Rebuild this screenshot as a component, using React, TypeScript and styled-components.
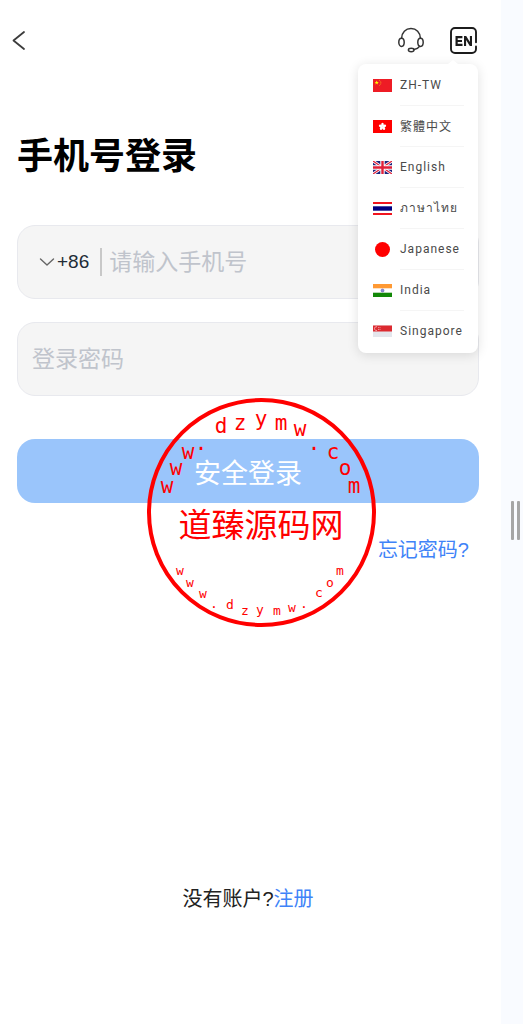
import React from 'react';
import styled, { createGlobalStyle } from 'styled-components';

const GlobalStyle = createGlobalStyle`
  *, *::before, *::after { box-sizing: border-box; }
  body {
    margin: 0;
    background: #fff;
    color: #000;
    font-family: "Liberation Sans", "Noto Sans CJK SC", sans-serif;
  }
  button, input { font: inherit; color: inherit; }
  button { padding: 0; border: 0; background: none; cursor: pointer; }
  svg { display: block; }
`;

const Page = styled.div`
  position: relative;
  display: flex;
  min-height: 100vh;
`;

const Screen = styled.main`
  flex: 1;
  min-width: 0;
  display: flex;
  flex-direction: column;
  padding: 0 22px 110px 17px;
`;

const Rail = styled.aside`
  flex: none;
  width: 22px;
  display: flex;
  align-items: center;
  gap: 3px;
  padding: 17px 0 0 10px;
  background: #f9fbff;
`;

const Grip = styled.span`
  width: 3px;
  height: 39px;
  border-radius: 1px;
  background: #a6a6a6;
`;

const Header = styled.header`
  display: flex;
  align-items: center;
  height: 80px;
`;

const IconButton = styled.button`
  display: flex;
`;

const BackButton = styled(IconButton)`
  margin: 0 auto 0 -8px;
`;

const Language = styled.div`
  position: relative;
  margin: 0 2px 0 25px;
`;

const Menu = styled.ul`
  position: absolute;
  z-index: 2;
  top: 37px;
  right: -1px;
  width: 120px;
  margin: 0;
  padding: 1px 14px 1px 15px;
  list-style: none;
  border-radius: 8px;
  background: #fff;
  box-shadow: 0 2px 12px rgba(0, 0, 0, 0.12);

  &::before {
    content: "";
    position: absolute;
    top: -4px;
    right: 20px;
    border: solid transparent;
    border-width: 0 5px 4px;
    border-bottom-color: #fff;
  }
`;

const MenuItem = styled.button`
  display: flex;
  align-items: center;
  gap: 8px;
  width: 100%;
  height: 41px;
  color: #4a4a4a;
  font-family: Roboto, "Noto Sans CJK TC", sans-serif;
  font-size: 12px;
  letter-spacing: 1px;
  text-align: left;
  white-space: nowrap;
`;

const MenuLabel = styled.span`
  flex: 1;
  display: flex;
  align-items: center;
  height: 100%;
  border-bottom: 1px solid #f5f5f5;

  li:last-child & { border-bottom-color: transparent; }
`;

const Title = styled.h1`
  margin: 50px 0 41px;
  font-size: 36px;
  line-height: 54px;
  font-weight: 700;
`;

const Form = styled.form`
  display: flex;
  flex-direction: column;
`;

const Field = styled.div`
  display: flex;
  align-items: center;
  height: 74px;
  margin-bottom: 23px;
  padding: 0 14px;
  border: 1px solid #e8e9ee;
  border-radius: 18px;
  background: #f5f5f5;
`;

const DialCode = styled.button`
  display: flex;
  align-items: center;
  gap: 2px;
  margin-left: 7px;
  padding-right: 11px;
  color: #222b36;
  font-size: 19px;
  line-height: 28px;
`;

const Divider = styled.span`
  width: 2px;
  height: 28px;
  margin-right: 7px;
  background: #c8c8c8;
`;

const TextInput = styled.input`
  flex: 1;
  min-width: 0;
  height: 40px;
  padding: 0;
  border: 0;
  outline: 0;
  background: none;
  font-size: 23px;

  &::placeholder { color: #c0c4cc; opacity: 1; }
`;

const Submit = styled.button`
  height: 64px;
  margin-top: 20px;
  border-radius: 18px;
  background: #9ac5fb;
  color: #fff;
  font-size: 27px;
`;

const TextLink = styled.a`
  color: #3f83f8;
  font-size: 20px;
  line-height: 30px;
  text-decoration: none;
`;

const ForgotLink = styled(TextLink)`
  align-self: flex-end;
  margin: 32px 10px 0 0;
`;

const Footer = styled.p`
  margin: auto 0 0;
  padding-top: 40px;
  color: #222;
  font-size: 20px;
  line-height: 30px;
  text-align: center;
`;

const Stamp = styled.svg`
  position: absolute;
  inset: 0;
  margin: auto;
  pointer-events: none;
  fill: #f00;
  text-anchor: middle;
  font-family: "DejaVu Sans Mono", monospace;
`;

const StampName = styled.text`
  font-family: "Noto Sans CJK SC", sans-serif;
  font-size: 33px;
`;

type Glyph = [string, number, number];

const outerRing: Glyph[] = [
  ['w', 20, 95], ['w', 29, 77], ['w', 41, 61], ['.', 54, 52],
  ['d', 74, 35], ['z', 93, 32], ['y', 114, 28], ['m', 134, 32], ['w', 153, 38],
  ['.', 167, 52], ['c', 186, 61], ['o', 198, 77], ['m', 207, 95],
];

const innerRing: Glyph[] = [
  ['w', 33, 177], ['w', 43, 189], ['w', 56, 200], ['.', 67, 210],
  ['d', 83, 211], ['z', 98, 217], ['y', 113, 216], ['m', 130, 217], ['w', 145, 214],
  ['.', 157, 210], ['c', 172, 199], ['o', 183, 189], ['m', 193, 177],
];

function Ring({ glyphs, size }: { glyphs: Glyph[]; size: number }) {
  return (
    <g fontSize={size}>
      {glyphs.map(([char, x, y], i) => (
        <text key={i} x={x} y={y}>{char}</text>
      ))}
    </g>
  );
}

const star = 'M0-2.2L.6-.7 2.1-.7.9.3 1.3 1.8 0 .9-1.3 1.8-.9.3-2.1-.7-.6-.7z';

const flags: Record<string, React.ReactNode> = {
  china: (
    <>
      <path fill="#ee1c25" d="M0 0h19v13H0z" />
      <path fill="#ff0" transform="translate(3.7 3.7)" d={star} />
      <path fill="none" stroke="#f5a81c" strokeWidth=".9" strokeDasharray="1 .9" d="M6.3 1.2c2 1 2.2 4 0 5.4" />
    </>
  ),
  hongkong: (
    <>
      <path fill="#f00" d="M0 0h19v13H0z" />
      <g fill="#fff">
        {[0, 72, 144, 216, 288].map((a) => (
          <ellipse key={a} cx="9.5" cy="4.7" rx="1.3" ry="1.9" transform={`rotate(${a} 9.5 6.6)`} />
        ))}
      </g>
    </>
  ),
  uk: (
    <>
      <path fill="#1a237e" d="M0 0h19v13H0z" />
      <path stroke="#fff" strokeWidth="2.8" d="M0 0l19 13M19 0L0 13" />
      <path stroke="#e0203a" strokeWidth="1.2" d="M0 0l19 13M19 0L0 13" />
      <path stroke="#fff" strokeWidth="4.4" d="M9.5 0v13M0 6.5h19" />
      <path stroke="#e0203a" strokeWidth="2.4" d="M9.5 0v13M0 6.5h19" />
    </>
  ),
  thailand: (
    <>
      <path fill="#fff" d="M0 0h19v13H0z" />
      <path fill="#f0141e" d="M0 0h19v2H0zM0 11h19v2H0z" />
      <path fill="#000080" d="M0 4.3h19v4.4H0z" />
    </>
  ),
  japan: <circle cx="9.5" cy="6.5" r="7.5" fill="#f00" />,
  india: (
    <>
      <path fill="#fff" d="M0 0h19v13H0z" />
      <path fill="#ff9933" d="M0 0h19v4.3H0z" />
      <path fill="#128807" d="M0 8.7h19V13H0z" />
      <circle cx="9.5" cy="6.5" r="1.5" fill="#8f8fd0" stroke="#4a4ab0" strokeWidth=".5" />
    </>
  ),
  singapore: (
    <>
      <path fill="#e4e6ec" d="M0 .5h19V12H0z" />
      <path fill="#dc2a30" d="M0 .5h19v6H0z" />
      <path fill="none" stroke="#f8c4c6" strokeWidth=".8" d="M4 1.8a1.9 1.9 0 1 0 0 3.6" />
      <path stroke="#f09a9d" strokeWidth=".9" d="M5 2.6h1M6.5 2.6h1M5 4.5h1M6.5 4.5h1" />
    </>
  ),
};

const languages = [
  { flag: 'china', label: 'ZH-TW' },
  { flag: 'hongkong', label: '繁體中文' },
  { flag: 'uk', label: 'English' },
  { flag: 'thailand', label: 'ภาษาไทย' },
  { flag: 'japan', label: 'Japanese' },
  { flag: 'india', label: 'India' },
  { flag: 'singapore', label: 'Singapore' },
];

export default function App() {
  return (
    <>
      <GlobalStyle />
      <Page>
        <Screen>
          <Header>
            <BackButton type="button" aria-label="返回">
              <svg width="20" height="24" viewBox="0 0 20 24" fill="none" stroke="#3c3c3c" strokeWidth="1.8" strokeLinecap="round" strokeLinejoin="round">
                <path d="M15 4L4.5 12.5 15 21" />
              </svg>
            </BackButton>
            <IconButton type="button" aria-label="客服">
              <svg width="28" height="28" viewBox="0 0 28 28" fill="none" stroke="#333" strokeWidth="1.5" strokeLinecap="round">
                <path d="M4.6 12.2C4.8 6.300 8.600 2.600 14 2.600s9.200 3.700 9.400 9.600" />
                <ellipse cx="4.500" cy="16.300" rx="2.700" ry="4.100" />
                <ellipse cx="23.500" cy="16.300" rx="2.700" ry="4.100" />
                <path d="M22.600 20.400c-1.200 1.800-3 2.700-5.600 3.100" />
                <ellipse cx="14.200" cy="24" rx="2.800" ry="1.700" />
              </svg>
            </IconButton>
            <Language>
              <IconButton type="button" aria-label="语言" aria-haspopup="menu" aria-expanded="true">
                <svg width="27" height="27" viewBox="0 0 27 27" fill="none" stroke="#1c1c1c">
                  <path strokeWidth="1.9" strokeLinecap="round" d="M26 15.300V5a4 4 0 0 0-4-4H5a4 4 0 0 0-4 4v17a4 4 0 0 0 4 4h17a4 4 0 0 0 4-4v-2.500" />
                  <path strokeWidth="2.200" d="M12.400 10.100H6.600v7.800h5.900M6.600 14h5.400" />
                  <path fill="#1c1c1c" stroke="none" d="M14 19V9h2.200l3.700 6V9h2.100v10h-2.200l-3.700-6v6z" />
                </svg>
              </IconButton>
              <Menu>
                {languages.map(({ flag, label }) => (
                  <li key={flag}>
                    <MenuItem type="button">
                      <svg width="19" height="13" viewBox="0 0 19 13" overflow={flag === 'japan' ? 'visible' : 'hidden'} aria-hidden="true">
                        {flags[flag]}
                      </svg>
                      <MenuLabel>{label}</MenuLabel>
                    </MenuItem>
                  </li>
                ))}
              </Menu>
            </Language>
          </Header>

          <Title>手机号登录</Title>

          <Form onSubmit={(e) => e.preventDefault()}>
            <Field>
              <DialCode type="button">
                <svg width="16" height="10" viewBox="0 0 16 10" fill="none" stroke="#666" strokeWidth="1.4" strokeLinecap="round" strokeLinejoin="round">
                  <path d="M1.500 2L8 8l6.500-6" />
                </svg>
                +86
              </DialCode>
              <Divider />
              <TextInput type="tel" aria-label="手机号" placeholder="请输入手机号" />
            </Field>
            <Field>
              <TextInput type="password" aria-label="登录密码" placeholder="登录密码" />
            </Field>
            <Submit type="submit">安全登录</Submit>
            <ForgotLink href="#forgot">忘记密码?</ForgotLink>
          </Form>

          <Footer>
            没有账户?<TextLink href="#register">注册</TextLink>
          </Footer>
        </Screen>

        <Rail>
          <Grip />
          <Grip />
        </Rail>

        <Stamp width="229" height="229" viewBox="0 0 229 229">
          <circle cx="114.500" cy="114.500" r="112.500" fill="none" stroke="#f00" strokeWidth="4" />
          <Ring glyphs={outerRing} size={21} />
          <StampName x="114" y="139">道臻源码网</StampName>
          <Ring glyphs={innerRing} size={13} />
        </Stamp>
      </Page>
    </>
  );
}
